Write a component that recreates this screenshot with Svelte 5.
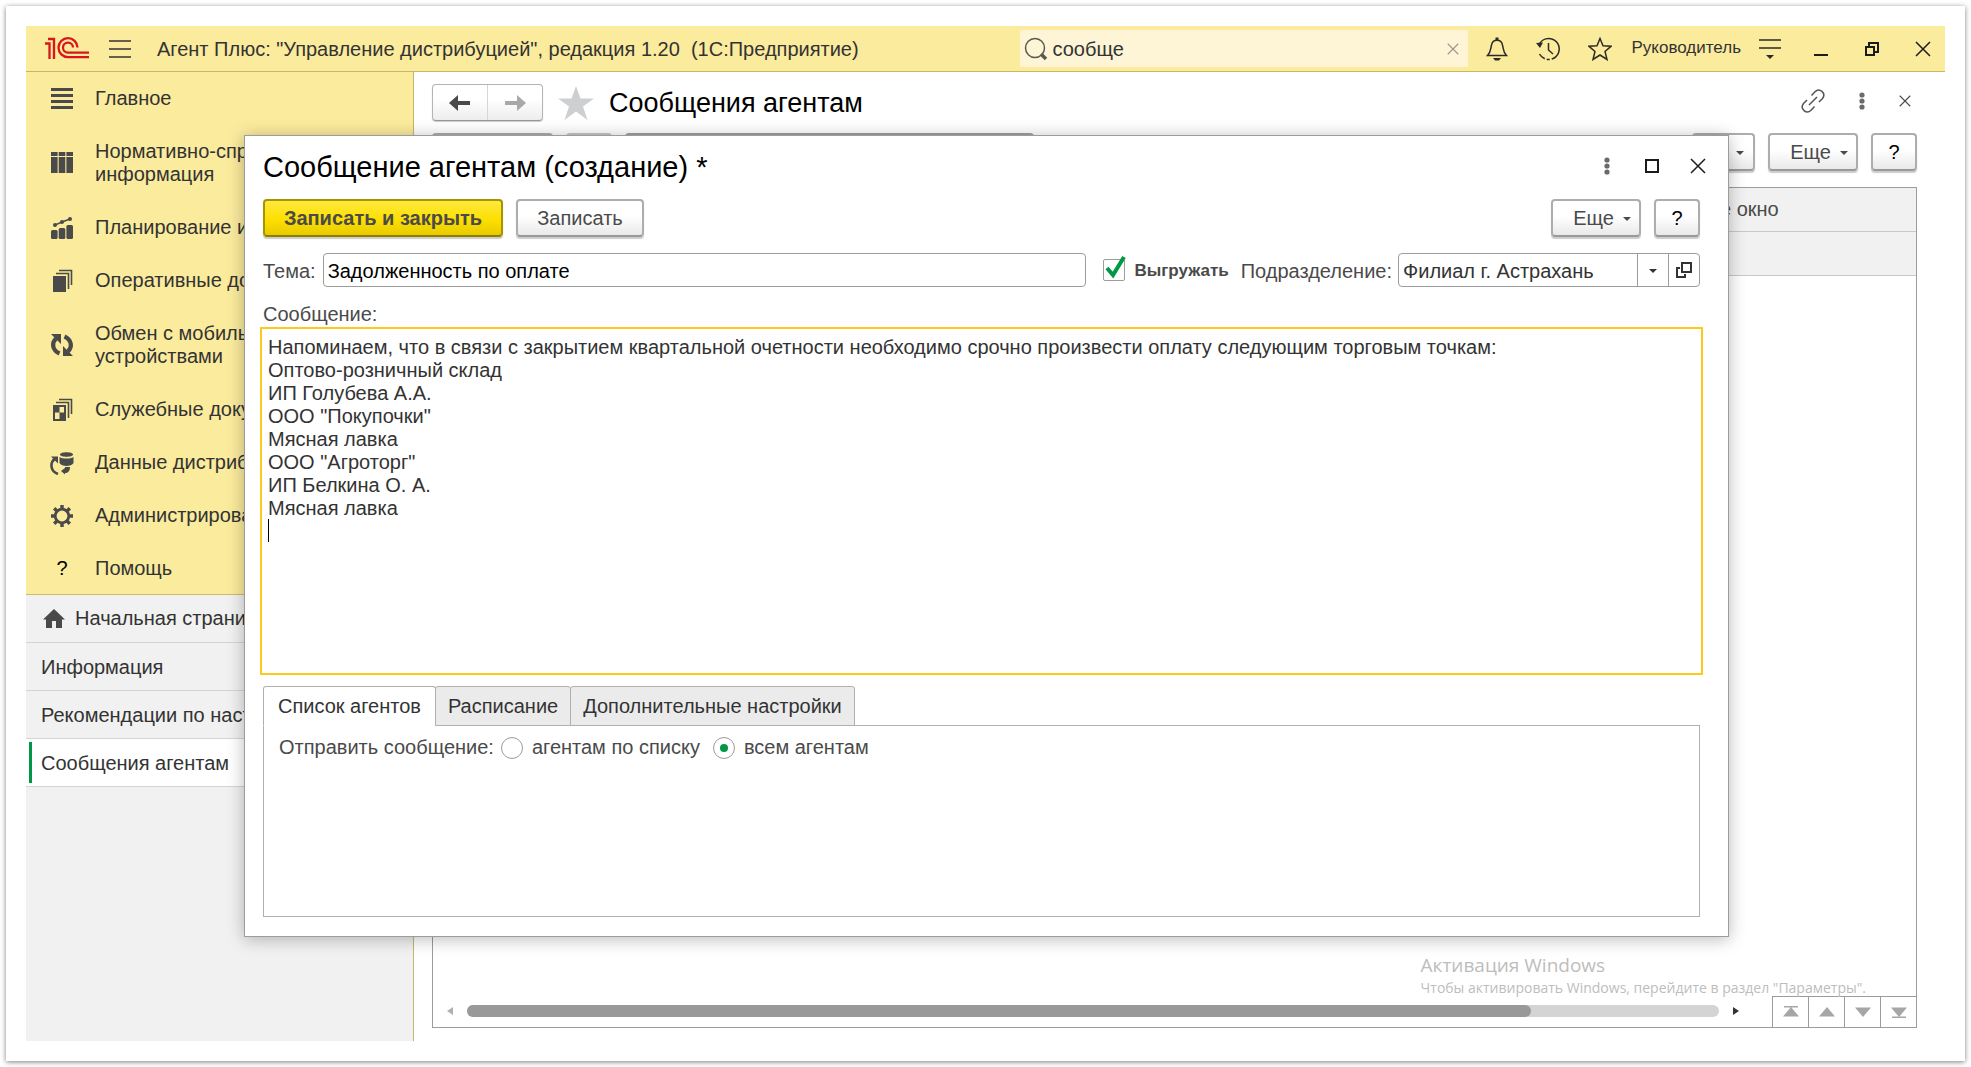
<script>
  const sections = [
    { icon: 'list', text: 'Главное' },
    { icon: 'columns', text: 'Нормативно-справочная\nинформация' },
    { icon: 'chart', text: 'Планирование и анализ' },
    { icon: 'docs', text: 'Оперативные документы' },
    { icon: 'sync', text: 'Обмен с мобильными\nустройствами' },
    { icon: 'service', text: 'Служебные документы' },
    { icon: 'data', text: 'Данные дистрибьюторов' },
    { icon: 'gear', text: 'Администрирование' },
    { icon: 'help', text: 'Помощь' }
  ];

  const pages = [
    { text: 'Начальная страница', home: true },
    { text: 'Информация' },
    { text: 'Рекомендации по настройке' },
    { text: 'Сообщения агентам' }
  ];

  const tabs = ['Список агентов', 'Расписание', 'Дополнительные настройки'];

  let activePage = $state(3);
  let activeTab = $state(0);
  let search = $state('сообще');
  let subject = $state('Задолженность по оплате');
  let upload = $state(true);
  let target = $state('all');
  let message = $state(`Напоминаем, что в связи с закрытием квартальной очетности необходимо срочно произвести оплату следующим торговым точкам:
Оптово-розничный склад
ИП Голубева А.А.
ООО "Покупочки"
Мясная лавка
ООО "Агроторг"
ИП Белкина О. А.
Мясная лавка
`);
</script>

{#snippet cross(size)}
  <svg width={size} height={size} viewBox="0 0 16 16" fill="none" stroke="currentColor" stroke-width="1.5">
    <path d="M1 1l14 14M15 1L1 15" />
  </svg>
{/snippet}

{#snippet dots()}
  <svg width="6" height="18" viewBox="0 0 6 18" fill="#6a6a6a">
    <circle cx="3" cy="3" r="2.6" /><circle cx="3" cy="9" r="2.6" /><circle cx="3" cy="15" r="2.6" />
  </svg>
{/snippet}

{#snippet sectionIcon(name)}
  <svg width="24" height="24" viewBox="0 0 24 24" fill="#4a4a4a">
    {#if name === 'list'}
      <path d="M1 1h22v3H1zM1 7h22v3H1zM1 13h22v3H1zM1 19h22v3H1z" />
    {:else if name === 'columns'}
      <path d="M1 1h6.600v4H1zM8.700 1h6.600v4H8.700zM16.400 1H23v4h-6.600zM1 6h6.600v16H1zM8.700 6h6.600v16H8.700zM16.400 6H23v16h-6.600z" />
    {:else if name === 'chart'}
      <rect x="1" y="14" width="6.600" height="9" rx="1.500" />
      <rect x="8.700" y="12" width="6.600" height="11" rx="1.500" />
      <rect x="16.400" y="9" width="6.600" height="14" rx="1.500" />
      <circle cx="5" cy="9" r="2" /><circle cx="12" cy="6" r="2" /><circle cx="20" cy="3" r="2" />
      <path d="M5 9l7-3 8-3" fill="none" stroke="#4a4a4a" stroke-width="1.4" />
    {:else if name === 'docs'}
      <path d="M3 7h13v16H3z" />
      <path d="M6 4.500h12.500V20M9 1.500h12.500V16" fill="none" stroke="#4a4a4a" stroke-width="1.600" />
    {:else if name === 'sync'}
      <path d="M6 5.500C1.500 10 2 17 9.500 20.500M18 18.500C22.500 14 22 7 14.500 3.500" fill="none" stroke="#4a4a4a" stroke-width="4.200" />
      <path d="M1 1h10v10zM23 23H13V13z" />
    {:else if name === 'service'}
      <path fill-rule="evenodd" d="M3 7h13v16H3zM9.500 9v5.500H14V9zM5 14.500V21h4.500v-6.500z" />
      <path d="M6 4.500h12.500V20M9 1.500h12.500V16" fill="none" stroke="#4a4a4a" stroke-width="1.600" />
    {:else if name === 'data'}
      <path d="M10 3.500c0-3 13-3 13 0s-13 3-13 0z" />
      <path d="M9.500 6c3 2 11 2 14 0v6c-2 4-12 4-14 0z" />
      <path d="M8 23C0 20 0 12 4.500 8" fill="none" stroke="#4a4a4a" stroke-width="2.600" />
      <path d="M1 5.500h7v7zM15 16h5c0 4-2 6-5 6v1.500l-4-3.500 4-3z" />
    {:else if name === 'gear'}
      <circle cx="12" cy="12" r="6.800" fill="none" stroke="#4a4a4a" stroke-width="2.800" />
      <path
        d="M12 1v4M12 19v4M1 12h4M19 12h4M4.200 4.200l3 3M16.800 16.800l3 3M4.200 19.800l3-3M16.800 7.200l3-3"
        stroke="#4a4a4a" stroke-width="3.400" />
    {/if}
  </svg>
{/snippet}

<div class="sheet">
  <div class="app">
    <header class="titlebar">
      <svg class="logo" width="44" height="23" viewBox="0 0 44 23" fill="none" stroke="#d9161c" stroke-width="2.300">
        <path d="M0 6.500h4.500V22M3 2h6v20" />
        <path d="M32.500 10.500A9.500 9.500 0 1 0 23 20.200h21" />
        <path d="M28 10.500A5 5 0 1 0 23 15.600h21" />
      </svg>
      <button class="plain menu" aria-label="Меню">
        <svg width="22" height="18" viewBox="0 0 22 18" stroke="#333" stroke-width="1.500">
          <path d="M0 1h22M0 9h22M0 17h22" />
        </svg>
      </button>
      <span class="app-name">Агент Плюс: "Управление дистрибуцией", редакция 1.20&nbsp; (1С:Предприятие)</span>

      <div class="search">
        <svg width="24" height="24" viewBox="0 0 24 24" fill="none" stroke="#5c5a4c" stroke-width="1.500">
          <circle cx="11" cy="11" r="9.500" /><path d="M17 17l5 5" stroke-width="3.500" />
        </svg>
        <input type="text" aria-label="Поиск" bind:value={search} />
        <button class="plain clear" aria-label="Очистить" onclick={() => (search = '')}>{@render cross(12)}</button>
      </div>

      <div class="tools">
        <button class="plain" aria-label="Уведомления">
          <svg width="22" height="24" viewBox="0 0 22 24" fill="none" stroke="#2b2b2b" stroke-width="1.500">
            <path d="M1.500 18.500C5 15 4.500 12 5.500 8c.6-3 2.500-4.800 5.500-4.800S15.900 5 16.500 8c1 4 .5 7 4 10.500z" />
            <path d="M11 .5v2.500" stroke-width="3" /><path d="M7 21h8l-2 2.500H9z" fill="#2b2b2b" stroke="none" />
          </svg>
        </button>
        <button class="plain" aria-label="История">
          <svg width="24" height="24" viewBox="0 0 24 24" fill="none" stroke="#2b2b2b" stroke-width="1.500">
            <path d="M3 8A10.500 10.500 0 1 1 3.500 17" stroke-dasharray="42 2 3 2 30" /><path d="M12.500 6v7l4.500 4" />
            <path d="M0 6l7-.5L4 11z" fill="#2b2b2b" stroke="none" />
          </svg>
        </button>
        <button class="plain" aria-label="Избранное">
          <svg width="24" height="24" viewBox="0 0 24 24" fill="none" stroke="#2b2b2b" stroke-width="1.500">
            <path d="M12 1.500l3 7.300 8 .5-6 5.200 2 8-7-4.500-7 4.500 2-8-6-5.200 8-.5z" />
          </svg>
        </button>
        <a class="user" href="#user">Руководитель</a>
        <button class="plain" aria-label="Настройки">
          <svg width="22" height="20" viewBox="0 0 22 20" stroke="#2b2b2b" stroke-width="1.500">
            <path d="M0 1h22M0 9h22" /><path d="M7 16h8l-4 4z" fill="#2b2b2b" stroke="none" />
          </svg>
        </button>
      </div>
      <div class="window-controls">
        <button class="plain" aria-label="Свернуть">
          <svg width="16" height="16" viewBox="0 0 16 16" fill="#1c1c1c"><path d="M1 13h14v2H1z" /></svg>
        </button>
        <button class="plain" aria-label="Восстановить">
          <svg width="16" height="16" viewBox="0 0 16 16" fill="none" stroke="#1c1c1c" stroke-width="2">
            <path d="M2 6h8v8H2zM5 5V2h9v9h-3" />
          </svg>
        </button>
        <button class="plain" aria-label="Закрыть приложение">{@render cross(16)}</button>
      </div>
    </header>

    <div class="workspace">
      <aside>
        <nav class="sections">
          {#each sections as s}
            <a href="#{s.icon}">
              {#if s.icon === 'help'}
                <span class="mark">?</span>
              {:else}
                {@render sectionIcon(s.icon)}
              {/if}
              <span class="section-text">{s.text}</span>
            </a>
          {/each}
        </nav>
        <nav class="pages">
          {#each pages as p, i}
            <a href="#page{i}" class:active={activePage === i} onclick={() => (activePage = i)}>
              {#if p.home}
                <svg width="22" height="20" viewBox="0 0 22 20" fill="#4a4a4a">
                  <path d="M11 0l11 10.500h-3V19h-6v-7H9v7H3v-8.500H0z" />
                </svg>
              {/if}
              {p.text}
            </a>
          {/each}
        </nav>
      </aside>

      <main>
        <div class="page-head">
          <div class="history">
            <button aria-label="Назад">
              <svg width="22" height="16" viewBox="0 0 22 16" fill="#4a4a4a"><path d="M0 8l9-8v6h12v4H9v6z" /></svg>
            </button>
            <button aria-label="Вперед">
              <svg width="22" height="16" viewBox="0 0 22 16" fill="#a9a9a9"><path d="M22 8l-9-8v6H1v4h12v6z" /></svg>
            </button>
          </div>
          <button class="plain fav" aria-label="В избранное">
            <svg width="36" height="34" viewBox="0 0 36 34" fill="#cdcfd0">
              <path d="M18 0l4.500 12.500H36L25 20.500 29.500 34 18 25.500 6.500 34 11 20.500 0 12.500h13.500z" />
            </svg>
          </button>
          <h1>Сообщения агентам</h1>
          <div class="page-tools">
            <button class="plain" aria-label="Ссылка">
              <svg width="24" height="24" viewBox="0 0 24 24" fill="none" stroke="#555" stroke-width="1.500">
                <path d="M10.500 6.500l3.500-3.800c4.500-4.500 11.500 1.500 7.500 6.800L18 13M13.500 17.500L10 21.300c-4.500 4.500-11.500-1.500-7.500-6.800L6 11M8 16l8-8" />
              </svg>
            </button>
            <button class="plain" aria-label="Действия">{@render dots()}</button>
            <button class="plain" aria-label="Закрыть список">{@render cross(12)}</button>
          </div>
        </div>

        <div class="toolbar">
          <button class="btn w-create" aria-label="Создать"></button>
          <button class="btn pale w-copy" aria-label="Скопировать"></button>
          <input class="find" type="text" aria-label="Найти" />
          <button class="btn w-drop" aria-label="Поиск по реквизитам"><i class="caret"></i></button>
          <button class="btn more">Еще <i class="caret"></i></button>
          <button class="btn help">?</button>
        </div>

        <div class="grid">
          <table>
            <thead>
              <tr><th></th><th class="popup">е окно</th></tr>
            </thead>
            <tbody>
              <tr><td></td><td></td></tr>
            </tbody>
          </table>
          <div class="watermark">
            <div class="wm-title">Активация Windows</div>
            <div class="wm-text">Чтобы активировать Windows, перейдите в раздел "Параметры".</div>
          </div>
          <div class="grid-foot">
            <div class="scroll">
              <svg width="8" height="8" viewBox="0 0 8 8" fill="#b0b0b0"><path d="M7 0v8L1 4z" /></svg>
              <div class="track"><div class="thumb"></div></div>
              <svg width="8" height="8" viewBox="0 0 8 8" fill="#333"><path d="M1 0v8l6-4z" /></svg>
            </div>
            <div class="jump">
              <button aria-label="В начало">
                <svg width="16" height="12" viewBox="0 0 16 12" fill="#a6a6a6"><path d="M1 0h14v1.500H1zM8 1l8 9.500H0z" /></svg>
              </button>
              <button aria-label="Вверх">
                <svg width="16" height="12" viewBox="0 0 16 12" fill="#a6a6a6"><path d="M8 1l8 9.500H0z" /></svg>
              </button>
              <button aria-label="Вниз">
                <svg width="16" height="12" viewBox="0 0 16 12" fill="#a6a6a6"><path d="M8 11L0 1.500h16z" /></svg>
              </button>
              <button aria-label="В конец">
                <svg width="16" height="12" viewBox="0 0 16 12" fill="#a6a6a6"><path d="M1 12h14v-1.500H1zM8 11L0 1.500h16z" /></svg>
              </button>
            </div>
          </div>
        </div>
      </main>
    </div>

    <div class="dialog" role="dialog" aria-labelledby="dlg-title">
      <div class="dlg-head">
        <h2 id="dlg-title">Сообщение агентам (создание) *</h2>
        <div class="dlg-tools">
          <button class="plain" aria-label="Еще действия">{@render dots()}</button>
          <button class="plain" aria-label="Развернуть">
            <svg width="14" height="14" viewBox="0 0 14 14" fill="none" stroke="#1c1c1c" stroke-width="2"><path d="M1 1h12v12H1z" /></svg>
          </button>
          <button class="plain" aria-label="Закрыть">{@render cross(16)}</button>
        </div>
      </div>

      <div class="commands">
        <button class="btn primary">Записать и закрыть</button>
        <button class="btn save">Записать</button>
        <span class="spacer"></span>
        <button class="btn more">Еще <i class="caret"></i></button>
        <button class="btn help">?</button>
      </div>

      <div class="fields">
        <label for="subject">Тема:</label>
        <input id="subject" class="subject" type="text" bind:value={subject} />
        <label class="upload">
          <span class="check">
            <input type="checkbox" bind:checked={upload} />
            {#if upload}
              <svg width="22" height="24" viewBox="0 0 22 24" fill="none" stroke="#009846" stroke-width="4"><path d="M3 13l6 7L20 2" /></svg>
            {/if}
          </span>
          Выгружать
        </label>
        <label for="division">Подразделение:</label>
        <div class="combo">
          <select id="division">
            <option>Филиал г. Астрахань</option>
          </select>
          <span class="combo-arrow"><i class="caret"></i></span>
          <button aria-label="Открыть">
            <svg width="16" height="16" viewBox="0 0 16 16" fill="none" stroke="#333" stroke-width="2">
              <path d="M6 1h9v9H6zM4 6H1v9h8v-3" />
            </svg>
          </button>
        </div>
      </div>

      <label class="message-label" for="message">Сообщение:</label>
      <div class="message">
        <textarea id="message" spellcheck="false" bind:value={message}></textarea>
        <span class="cursor"></span>
      </div>

      <div class="tabs" role="tablist">
        {#each tabs as tab, i}
          <button role="tab" aria-selected={activeTab === i} class:active={activeTab === i} onclick={() => (activeTab = i)}>{tab}</button>
        {/each}
      </div>
      <div class="panel">
        <span>Отправить сообщение:</span>
        <label><input type="radio" name="target" value="list" bind:group={target} />агентам по списку</label>
        <label><input type="radio" name="target" value="all" bind:group={target} />всем агентам</label>
      </div>
    </div>
  </div>
</div>

<style>
  :global(body) {
    margin: 0;
    background: #fff;
  }

  .sheet {
    margin: 6px;
    padding: 20px;
    min-height: calc(100vh - 12px);
    box-sizing: border-box;
    display: flex;
    background: #fff;
    box-shadow: 0 1px 5px rgba(0, 0, 0, 0.5);
    font-family: 'Liberation Sans', Arial, sans-serif;
    font-size: 20px;
    line-height: 23px;
    color: #333;
  }
  .sheet *, .sheet *::before { box-sizing: border-box; }

  button, input, select, textarea {
    font: inherit;
    color: inherit;
    margin: 0;
  }
  svg { display: block; flex-shrink: 0; }
  a { color: inherit; text-decoration: none; }
  h1, h2 {
    margin: 0;
    font-size: 27px;
    line-height: 32px;
    font-weight: 400;
    color: #000;
    white-space: nowrap;
  }
  h2 { font-size: 29px; }

  .app {
    position: relative;
    flex: 1;
    min-width: 0;
    display: flex;
    flex-direction: column;
  }

  .plain {
    display: flex;
    align-items: center;
    justify-content: center;
    padding: 0;
    border: 0;
    background: none;
  }

  /* Title bar */
  .titlebar {
    display: flex;
    align-items: center;
    height: 46px;
    padding: 0 14px 0 19px;
    background: #fbeb9d;
    border-bottom: 1px solid #c9b863;
  }
  .menu { margin: 0 26px 0 20px; }
  .app-name {
    flex: 1;
    padding-top: 2px;
    white-space: nowrap;
  }
  .search {
    display: flex;
    align-items: center;
    width: 448px;
    height: 37px;
    padding: 0 9px 0 4px;
    border-radius: 2px;
    background: #fdf5d5;
  }
  .search input {
    flex: 1;
    min-width: 0;
    padding: 2px 4px 0;
    border: 0;
    outline: 0;
    background: none;
  }
  .clear { color: #9b978a; }
  .tools {
    display: flex;
    align-items: center;
    gap: 28px;
    margin-left: 18px;
  }
  .user {
    margin: 0 -10px 0 -9px;
    padding-bottom: 2px;
    font-size: 17px;
  }
  .window-controls {
    display: flex;
    gap: 35px;
    margin-left: 32px;
    color: #1c1c1c;
  }

  .workspace {
    flex: 1;
    display: flex;
  }

  /* Left side */
  aside {
    display: flex;
    flex-direction: column;
    width: 388px;
    flex-shrink: 0;
    background: #f1f1f1;
    border-right: 1px solid #c4b56a;
  }
  .sections {
    background: #fbeb9d;
    border-bottom: 1px solid #cdbb66;
  }
  .sections a {
    display: flex;
    align-items: center;
    padding: 15px 0 15px 24px;
  }
  .sections a:last-child { padding-bottom: 14px; }
  .sections svg { margin: -1px 0; }
  .section-text {
    margin-left: 21px;
    white-space: pre;
  }
  .mark {
    width: 24px;
    text-align: center;
    color: #000;
  }
  .pages a {
    position: relative;
    display: flex;
    align-items: center;
    gap: 10px;
    height: 48px;
    padding: 2px 0 0 15px;
    border-bottom: 1px solid #d4d4d4;
    white-space: nowrap;
  }
  .pages a:first-child { padding: 0 0 0 17px; }
  .pages a.active { background: #fff; }
  .pages a.active::before {
    content: '';
    position: absolute;
    left: 3px;
    top: 3px;
    bottom: 3px;
    width: 3px;
    background: #009846;
  }

  /* Main list */
  main {
    flex: 1;
    min-width: 0;
    display: flex;
    flex-direction: column;
    padding: 12px 28px 13px 18px;
  }
  .page-head {
    display: flex;
    align-items: center;
  }
  .history {
    display: flex;
    width: 111px;
    height: 37px;
    border: 1px solid #b4b4b4;
    border-bottom-color: #979797;
    border-radius: 4px;
    background: linear-gradient(#fff 40%, #ededed);
    box-shadow: 0 1px 1px #ccc;
  }
  .history button {
    flex: 1;
    display: flex;
    align-items: center;
    justify-content: center;
    border: 0;
    background: none;
  }
  .history button + button { border-left: 1px solid #d6d6d6; }
  .fav { margin: 0 15px; }
  .page-tools {
    display: flex;
    align-items: center;
    gap: 34px;
    margin: 0 6px 0 auto;
    padding-bottom: 4px;
    color: #4a4a4a;
  }

  .btn {
    display: flex;
    align-items: center;
    justify-content: center;
    height: 38px;
    padding: 0;
    border: 2px solid #adadad;
    border-bottom-color: #999;
    border-radius: 4px;
    background: linear-gradient(#fff 45%, #e9e9e9);
    box-shadow: 0 2px 1px #ccc;
    color: #4a4a4a;
    flex-shrink: 0;
  }
  .caret {
    margin-top: 2px;
    border: 4px solid transparent;
    border-top-color: currentColor;
    border-bottom: 0;
  }
  .more {
    width: 90px;
    gap: 9px;
    padding-left: 12px;
  }
  .help {
    width: 46px;
    color: #000;
  }
  .toolbar {
    display: flex;
    gap: 13px;
    margin: 12px 0 16px;
  }
  .pale { border-color: #c6c6c6; }
  .w-create { width: 121px; }
  .w-copy { width: 46px; }
  .find {
    width: 409px;
    height: 38px;
    margin-right: auto;
    border: 2px solid #a0a0a0;
    border-radius: 4px;
  }
  .w-drop {
    width: 63px;
    justify-content: flex-end;
    padding-right: 9px;
  }

  .grid {
    position: relative;
    flex: 1;
    display: flex;
    flex-direction: column;
    justify-content: space-between;
    border: 1px solid #9c9c9c;
  }
  table {
    width: 100%;
    border-collapse: collapse;
  }
  th, td {
    height: 44px;
    padding: 0;
    border-bottom: 1px solid #c9c9c9;
    background: #f1f1f1;
    font-weight: 400;
    text-align: left;
    color: #4a4a4a;
  }
  th { height: 43px; }
  .popup { width: 196px; }
  .grid-foot {
    display: flex;
    align-items: flex-end;
    justify-content: space-between;
  }
  .scroll {
    flex: 1;
    display: flex;
    align-items: center;
    gap: 13px;
    height: 32px;
    padding: 0 32px 0 13px;
  }
  .track {
    flex: 1;
    height: 12px;
    border-radius: 6px;
    background: #d4d4d4;
  }
  .thumb {
    width: 85%;
    height: 12px;
    border-radius: 6px;
    background: #999;
  }
  .jump {
    display: flex;
    border-top: 1px solid #9c9c9c;
  }
  .jump button {
    display: flex;
    align-items: center;
    justify-content: center;
    width: 36px;
    height: 30px;
    padding: 0;
    border: 0;
    border-left: 1px solid #9c9c9c;
    background: #fff;
  }
  .watermark {
    position: absolute;
    right: 50px;
    bottom: 28px;
    font-family: 'Open Sans', 'Noto Sans', sans-serif;
    color: #bdbdbd;
  }
  .wm-title {
    font-size: 19px;
    line-height: 24px;
  }
  .wm-text {
    font-size: 14px;
    line-height: 22px;
    white-space: nowrap;
  }

  /* Message form */
  .dialog {
    position: absolute;
    left: 218px;
    right: 216px;
    top: 109px;
    bottom: 104px;
    display: flex;
    flex-direction: column;
    padding: 15px 28px 19px 18px;
    background: #fff;
    border: 1px solid #9c9c9c;
    box-shadow: 0 2px 16px rgba(0, 0, 0, 0.28);
  }
  .dlg-head {
    display: flex;
    align-items: center;
    justify-content: space-between;
  }
  .dlg-tools {
    display: flex;
    align-items: center;
    gap: 31px;
    margin-right: -6px;
    padding-bottom: 2px;
    color: #1c1c1c;
  }
  .dlg-tools button:first-child { margin-right: 4px; }
  .commands {
    display: flex;
    gap: 13px;
    margin-top: 16px;
  }
  .spacer { flex: 1; }
  .primary {
    width: 240px;
    border-color: #a89400;
    border-bottom-color: #8f7e00;
    background: linear-gradient(#ffe93f, #fddf00 55%, #e8cb00);
    font-weight: 700;
  }
  .save { width: 128px; }

  .fields {
    display: flex;
    align-items: center;
    height: 34px;
    margin-top: 16px;
    color: #4a4a4a;
    white-space: nowrap;
  }
  .fields label { padding-top: 2px; }
  .subject {
    flex: 1;
    min-width: 0;
    height: 34px;
    margin-left: 7px;
    padding: 2px 4px 0;
    border: 1px solid #9c9c9c;
    border-radius: 4px;
    outline: 0;
    color: #000;
  }
  .fields .upload {
    display: flex;
    align-items: center;
    gap: 9px;
    margin: 0 12px 0 17px;
    padding: 0;
    font-size: 17px;
    font-weight: 700;
  }
  .check {
    position: relative;
    display: flex;
  }
  .check input {
    appearance: none;
    width: 22px;
    height: 22px;
    border: 1px solid #9c9c9c;
    border-radius: 2px;
    background: #fff;
  }
  .check svg {
    position: absolute;
    left: 1px;
    top: -4px;
    pointer-events: none;
  }
  .combo {
    display: flex;
    width: 302px;
    height: 34px;
    margin-left: 6px;
    border: 1px solid #9c9c9c;
    border-radius: 4px;
    color: #333;
  }
  .combo select {
    appearance: none;
    flex: 1;
    min-width: 0;
    padding: 2px 4px 0;
    border: 0;
    outline: 0;
    background: none;
  }
  .combo-arrow, .combo button {
    display: flex;
    align-items: center;
    justify-content: center;
    width: 31px;
    padding: 0;
    border: 0;
    border-left: 1px solid #9c9c9c;
    background: none;
  }
  .combo-arrow {
    margin-left: -31px;
    pointer-events: none;
  }

  .message-label {
    margin-top: 16px;
    color: #4a4a4a;
  }
  .message {
    position: relative;
    flex: 1;
    display: flex;
    margin: 1px -3px 0;
    border: 2px solid #fbca1c;
  }
  .message textarea {
    flex: 1;
    padding: 7px 6px;
    border: 0;
    outline: 0;
    resize: none;
    background: none;
    overflow: hidden;
  }
  .cursor {
    position: absolute;
    left: 6px;
    top: 190px;
    width: 1px;
    height: 23px;
    background: #000;
  }

  .tabs {
    position: relative;
    z-index: 1;
    display: flex;
    margin-top: 11px;
  }
  .tabs button {
    height: 40px;
    padding: 0 12px;
    border: 1px solid #b0b0b0;
    border-radius: 3px 3px 0 0;
    background: #ebebeb;
  }
  .tabs button + button { margin-left: -1px; }
  .tabs button.active {
    padding: 0 14px;
    background: #fff;
    border-bottom-color: #fff;
  }
  .panel {
    display: flex;
    align-items: flex-start;
    height: 192px;
    margin-top: -1px;
    padding: 10px 15px;
    border: 1px solid #b0b0b0;
    color: #4a4a4a;
  }
  .panel label {
    display: flex;
    align-items: center;
    gap: 9px;
    margin-left: 7px;
  }
  .panel label + label { margin-left: 13px; }
  .panel input {
    appearance: none;
    display: grid;
    place-content: center;
    width: 22px;
    height: 22px;
    border: 1px solid #9c9c9c;
    border-radius: 50%;
  }
  .panel input:checked::before {
    content: '';
    width: 8px;
    height: 8px;
    border-radius: 50%;
    background: #009846;
  }
</style>
